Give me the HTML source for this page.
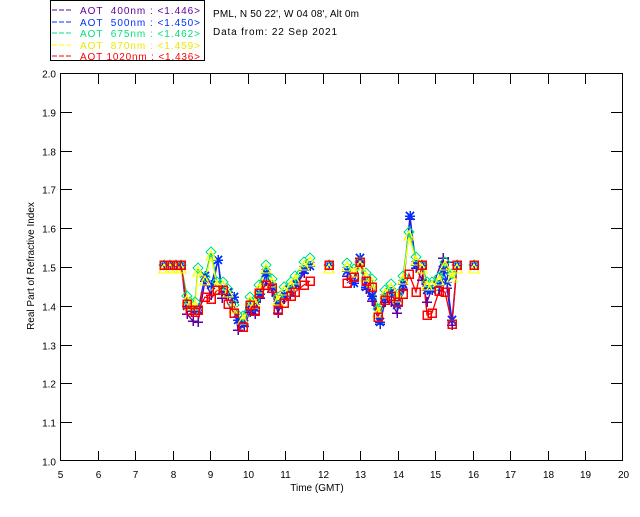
<!DOCTYPE html>
<html><head><style>
body{margin:0;background:#fff;}
svg text{font-family:"Liberation Sans",sans-serif;font-size:10px;white-space:pre;}
</style></head><body>
<svg id="s" width="640" height="512" xmlns="http://www.w3.org/2000/svg" shape-rendering="crispEdges" xml:space="preserve">
<rect x="0" y="0" width="640" height="512" fill="#fff"/>
<rect x="50.5" y="0.5" width="154" height="60" fill="none" stroke="#000"/>
<g font-size="10">
<line x1="52" y1="10" x2="73" y2="10" stroke="#6000a0" stroke-dasharray="5,2"/><text x="80" y="14" fill="#6000a0" textLength="120" lengthAdjust="spacing">AOT  400nm : &lt;1.446&gt;</text>
<line x1="52" y1="22" x2="73" y2="22" stroke="#0030ff" stroke-dasharray="5,2"/><text x="80" y="26" fill="#0030ff" textLength="120" lengthAdjust="spacing">AOT  500nm : &lt;1.450&gt;</text>
<line x1="52" y1="33" x2="73" y2="33" stroke="#00e080" stroke-dasharray="5,2"/><text x="80" y="37" fill="#00e080" textLength="120" lengthAdjust="spacing">AOT  675nm : &lt;1.462&gt;</text>
<line x1="52" y1="45" x2="73" y2="45" stroke="#ffff00" stroke-dasharray="5,2"/><text x="80" y="49" fill="#e8e800" textLength="120" lengthAdjust="spacing">AOT  870nm : &lt;1.459&gt;</text>
<line x1="52" y1="56" x2="73" y2="56" stroke="#ff0000" stroke-dasharray="5,2"/><text x="80" y="60" fill="#ff0000" textLength="120" lengthAdjust="spacing">AOT 1020nm : &lt;1.436&gt;</text>
</g>
<text x="213" y="17" textLength="146" lengthAdjust="spacing">PML, N 50 22', W 04 08', Alt 0m</text>
<text x="213" y="35" textLength="124" lengthAdjust="spacing">Data from: 22 Sep 2021</text>
<rect x="60.5" y="73.5" width="562" height="387" fill="none" stroke="#000"/>
<text x="317" y="491" text-anchor="middle">Time (GMT)</text>
<text transform="translate(34,266) rotate(-90)" text-anchor="middle">Real Part of Refractive Index</text>
<g id="ax"></g>
<g id="d"></g>
</svg>
<script>
var ns="http://www.w3.org/2000/svg";
function el(t,a,p){var e=document.createElementNS(ns,t);for(var k in a)e.setAttribute(k,a[k]);(p||document.getElementById('d')).appendChild(e);return e;}
var ax=document.getElementById('ax');
for(var h=5;h<=20;h++){var x=60+(h-5)*37.53;x=Math.round(x)+0.5;
 if(h>5&&h<20){el('line',{x1:x,y1:461,x2:x,y2:451,stroke:'#000'},ax);el('line',{x1:x,y1:74,x2:x,y2:84,stroke:'#000'},ax);}
 var t=el('text',{x:x,y:478,'text-anchor':'middle'},ax);t.textContent=h;}
for(var i=0;i<=10;i++){var y=Math.round(461-i*38.8)+0.5;
 if(i>0&&i<10){el('line',{x1:61,y1:y,x2:72,y2:y,stroke:'#000'},ax);el('line',{x1:622,y1:y,x2:611,y2:y,stroke:'#000'},ax);}
 var t=el('text',{x:56,y:y+4,'text-anchor':'end'},ax);t.textContent=(1+i/10).toFixed(1);}
var R=[[164,265],[170,265],[176,265],[181,265],[187,304],[190,310],[195,312],[198,310],[205,297],[211,299],[217,290],[223,290],[228,304],[234,313],[243,327],[250,305],[255,311],[259,293],[266,285],[272,288],[278,310],[284,303],[291,296],[295,292],[304,285],[310,281],null,[329,265],null,[347,283],[354,277],[360,262],[366,281],[372,287],[378,317],[385,300],[391,296],[398,302],[403,294],[409,274],[416,292],[422,265],[427,315],[432,313],[439,291],[445,292],[452,324],[457,265],null,[474,265]];
var B=[[164,265],[170,265],[176,265],[181,265],[187,306],[193,311],[198,310],[205,276],[211,285],[218,260],[222,290],[228,292],[234,297],[238,320],[244,324],[250,307],[255,308],[260,294],[266,273],[272,287],[278,305],[284,295],[290,290],[296,284],[304,270],[310,266],null,[329,265],null,[347,271],[354,283],[360,258],[366,287],[372,296],[380,322],[385,298],[391,292],[397,305],[403,284],[410,216],[416,265],[422,265],[427,290],[432,290],[439,285],[443,270],[447,282],[452,320],[457,265],null,[474,265]];
var P=B.map(function(p,i){if(!p)return null;var d=[0,0,0,0,8,10,12,5,10,0,8,3,5,10,2,5,6,4,8,5,8,4,5,2,3,0,0,0,0,5,0,4,2,5,2,4,10,8,5,3,3,15,12,5,5,3,6,5,0,0,0][i]||0;return [p[0],p[1]+d];});
P[43]=[443,258];P[45]=[448,262];
var G=R.map(function(p,i){if(!p)return null;var y=p[1];if(y>267)y=Math.min(y,B[i]?B[i][1]:y)-8;if(i==39)y=232;return [p[0],y];});
var Y=G.map(function(p){return p?[p[0],p[1]+4]:null;});
function line(S,c){var seg=[];S.forEach(function(p){if(p)seg.push(p.join(','));else{draw();}});draw();
 function draw(){if(seg.length>1)el('polyline',{points:seg.join(' '),fill:'none',stroke:c,'stroke-width':1.3,'shape-rendering':'auto'});seg=[];}}
function plus(S,c){S.forEach(function(p){if(!p)return;el('path',{d:'M'+(p[0]-5)+' '+p[1]+'h10M'+p[0]+' '+(p[1]-5)+'v10',stroke:c,'stroke-width':1.5});});}
function star(S,c){S.forEach(function(p){if(!p)return;el('path',{d:'M'+(p[0]-5)+' '+p[1]+'h10M'+p[0]+' '+(p[1]-5)+'v10M'+(p[0]-4)+' '+(p[1]-4)+'l8 8M'+(p[0]-4)+' '+(p[1]+4)+'l8 -8',stroke:c,'stroke-width':1.5});});}
function dia(S,c){S.forEach(function(p){if(!p)return;el('path',{d:'M'+p[0]+' '+(p[1]-5)+'l5 5l-5 5l-5 -5z',stroke:c,fill:'none','stroke-width':1.3});});}
function tri(S,c){S.forEach(function(p){if(!p)return;el('path',{d:'M'+p[0]+' '+(p[1]-5)+'l5 9h-10z',stroke:c,fill:'none','stroke-width':1.3});});}
function sq(S,c){S.forEach(function(p){if(!p)return;el('rect',{x:p[0]-4,y:p[1]-4,width:8,height:8,stroke:c,fill:'none','stroke-width':1.5});});}
line(P,'#6000a0');line(B,'#0030ff');line(G,'#00e080');line(Y,'#ffff00');line(R,'#ff0000');
plus(P,'#6000a0');star(B,'#0030ff');dia(G,'#00e080');tri(Y,'#ffff00');sq(R,'#ff0000');
</script>
</body></html>
